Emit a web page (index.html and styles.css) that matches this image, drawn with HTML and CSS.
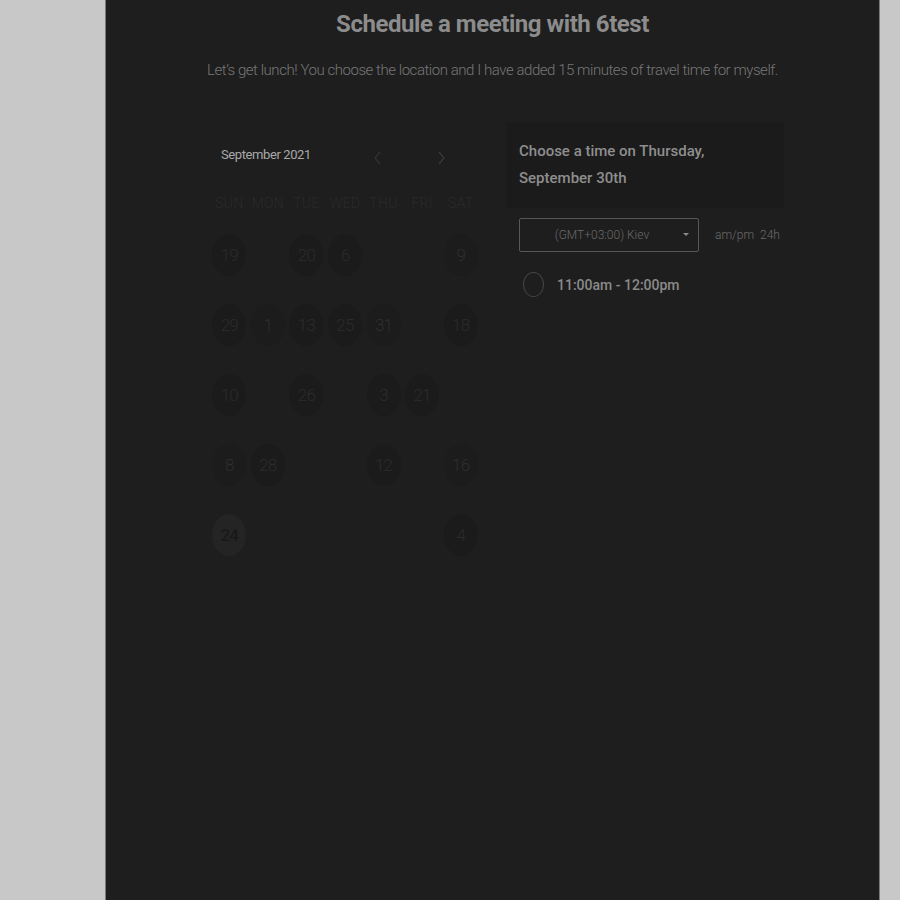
FILE: index.html
```html
<!DOCTYPE html>
<html lang="en">
<head>
	<meta charset="UTF-8">
	<title>Schedule a meeting</title>
	<link rel="stylesheet" href="styles.css">
</head>
<body>
	<div class="page">
		<h1 class="title">Schedule a meeting with 6test</h1>
		<p class="subtitle">Let’s get lunch! You choose the location and I have added 15 minutes of travel time for myself.</p>

		<div class="content">
			<div class="calendar">
				<div class="cal-head">
					<span class="month">September 2021</span>
					<span class="nav">
						<svg width="10" height="14" viewBox="0 0 10 14"><path d="M7 1 L2 7 L7 13" fill="none" stroke="#333" stroke-width="1.2"/></svg>
						<svg width="10" height="14" viewBox="0 0 10 14"><path d="M3 1 L8 7 L3 13" fill="none" stroke="#3a3a3a" stroke-width="1.2"/></svg>
					</span>
				</div>
				<div class="weekdays">
					<span>SUN</span><span>MON</span><span>TUE</span><span>WED</span><span>THU</span><span>FRI</span><span>SAT</span>
				</div>
				<div class="days">
					<div class="day"><span class="dot">19</span></div>
					<div class="day"></div>
					<div class="day"><span class="dot">20</span></div>
					<div class="day"><span class="dot">6</span></div>
					<div class="day"></div>
					<div class="day"></div>
					<div class="day"><span class="dot faint">9</span></div>

					<div class="day"><span class="dot">29</span></div>
					<div class="day"><span class="dot faint">1</span></div>
					<div class="day"><span class="dot">13</span></div>
					<div class="day"><span class="dot">25</span></div>
					<div class="day"><span class="dot faint">31</span></div>
					<div class="day"></div>
					<div class="day"><span class="dot">18</span></div>

					<div class="day"><span class="dot">10</span></div>
					<div class="day"></div>
					<div class="day"><span class="dot">26</span></div>
					<div class="day"></div>
					<div class="day"><span class="dot">3</span></div>
					<div class="day"><span class="dot">21</span></div>
					<div class="day"></div>

					<div class="day"><span class="dot faint">8</span></div>
					<div class="day"><span class="dot">28</span></div>
					<div class="day"></div>
					<div class="day"></div>
					<div class="day"><span class="dot">12</span></div>
					<div class="day"></div>
					<div class="day"><span class="dot faint">16</span></div>

					<div class="day"><span class="dot selected">24</span></div>
					<div class="day"></div>
					<div class="day"></div>
					<div class="day"></div>
					<div class="day"></div>
					<div class="day"></div>
					<div class="day"><span class="dot">4</span></div>
				</div>
			</div>

			<div class="times">
				<div class="times-head">Choose a time on Thursday,<br>September 30th</div>
				<div class="tz-row">
					<div class="tz-select">
						<span>(GMT+03:00) Kiev</span>
						<span class="caret"></span>
					</div>
					<span class="fmt">am/pm&nbsp; 24h</span>
				</div>
				<div class="slot">
					<span class="radio"></span>
					<span class="slot-text">11:00am - 12:00pm</span>
				</div>
			</div>
		</div>
	</div>
</body>
</html>
```

FILE: styles.css
```css
html, body {
	margin: 0;
	padding: 0;
}
body {
	background-color: #c8c8c8;
	font-family: Roboto, "Liberation Sans", sans-serif;
}
.page {
	margin-left: 105px;
	width: 773px;
	min-height: 900px;
	background-color: #1e1e1e;
	border-left: 1px solid #7a7a7a;
	border-right: 1px solid #7a7a7a;
	text-align: center;
}
.title {
	margin: 0;
	padding-top: 10px;
	font-size: 24px;
	line-height: 29px;
	font-weight: 700;
	letter-spacing: -0.45px;
	color: #8c8c8c;
}
.subtitle {
	margin: 22px 0 0;
	font-size: 15px;
	line-height: 18px;
	font-weight: 300;
	letter-spacing: -0.45px;
	color: #777;
}

.content {
	display: flex;
	text-align: left;
	margin-top: 43px;
	padding-left: 104px;
	gap: 26px;
}

/* calendar */
.calendar {
	width: 270px;
}
.cal-head {
	display: flex;
	align-items: center;
	padding-top: 24px;
	height: 16px;
}
.month {
	margin-left: 11px;
	font-size: 13px;
	font-weight: 400;
	letter-spacing: -0.4px;
	color: #a8a8a8;
}
.nav {
	display: flex;
	gap: 53px;
	margin-left: 62px;
	margin-top: 8px;
}
.weekdays {
	display: grid;
	grid-template-columns: repeat(7, 1fr);
	margin-top: 33px;
	font-size: 14px;
	line-height: 16px;
	font-weight: 300;
	letter-spacing: 0.3px;
	color: #2a2a2a;
	text-align: center;
}
.days {
	display: grid;
	grid-template-columns: repeat(7, 1fr);
	grid-auto-rows: 70px;
	margin-top: 9px;
}
.day {
	display: flex;
	align-items: center;
	justify-content: center;
}
.dot {
	width: 34px;
	height: 42px;
	border-radius: 50%;
	background-color: #1b1b1b;
	display: flex;
	align-items: center;
	justify-content: center;
	font-size: 17px;
	font-weight: 300;
	letter-spacing: -0.8px;
	color: #2b2b2b;
}
.dot.faint {
	background-color: #1c1c1c;
	color: #2f2f2f;
}
.dot.selected {
	background-color: #242424;
	color: #191919;
	font-weight: 500;
}

/* time picker */
.times {
	width: 278px;
}
.times-head {
	background-color: #1b1b1b;
	padding: 16px 13px 16px;
	font-size: 15px;
	line-height: 27px;
	font-weight: 500;
	color: #8e8e8e;
}
.tz-row {
	display: flex;
	align-items: center;
	margin-top: 10px;
	padding-left: 13px;
}
.tz-select {
	width: 178px;
	height: 32px;
	border: 1px solid #575757;
	border-radius: 2px;
	display: flex;
	align-items: center;
	justify-content: center;
	position: relative;
	font-size: 12px;
	font-weight: 300;
	color: #6a6a6a;
}
.tz-select span:first-child {
	margin-right: 14px;
}
.caret {
	position: absolute;
	right: 9px;
	top: 14px;
	border-left: 3px solid transparent;
	border-right: 3px solid transparent;
	border-top: 3px solid #8a8a8a;
}
.fmt {
	margin-left: 16px;
	font-size: 12px;
	font-weight: 300;
	color: #6a6a6a;
}
.slot {
	display: flex;
	align-items: center;
	margin-top: 20px;
	padding-left: 17px;
}
.radio {
	width: 19px;
	height: 23px;
	border: 1px solid #454545;
	border-radius: 50%;
}
.slot-text {
	margin-left: 13px;
	font-size: 14px;
	font-weight: 500;
	color: #8a8a8a;
}
```
